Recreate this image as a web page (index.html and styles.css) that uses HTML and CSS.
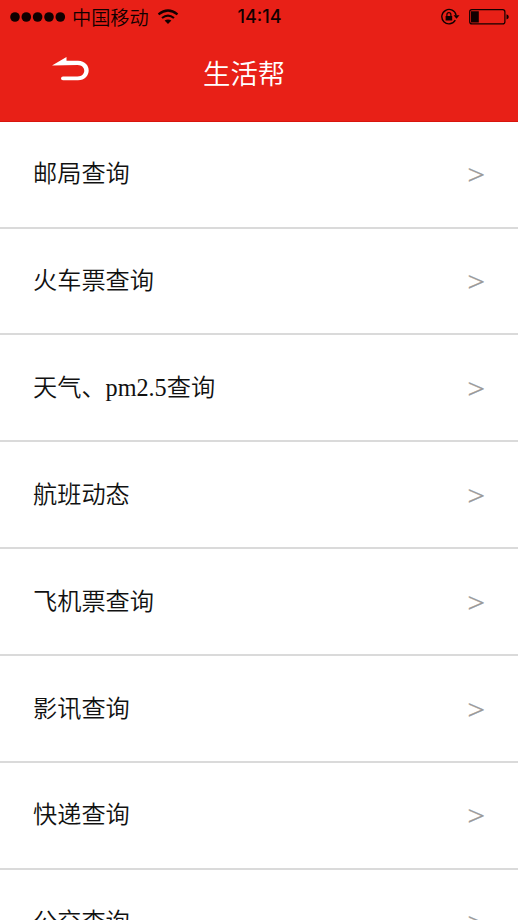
FILE: index.html
```
<!DOCTYPE html>
<html lang="zh-CN">
<head>
<meta charset="utf-8">
<title>生活帮</title>
<link rel="stylesheet" href="styles.css">
</head>
<body>
<header class="header">
  <div class="status">
    <div class="carrier">
      <svg class="dots" width="56" height="12" viewBox="0 0 56 12"><circle cx="5" cy="6" r="4.8"/><circle cx="16.3" cy="6" r="4.8"/><circle cx="27.6" cy="6" r="4.8"/><circle cx="39" cy="6" r="4.8"/><circle cx="50.3" cy="6" r="4.8"/></svg>
      <span class="name">中国移动</span>
      <svg class="wifi" width="22" height="16" viewBox="0 0 22 16"><path d="M1.5 5.3Q11 -2.3 20.5 5.3M5 9Q11 4.2 17 9" fill="none" stroke="#100" stroke-width="2.2"/><path d="M7.6 11.6Q11 9.2 14.4 11.6L11 15Z"/></svg>
    </div>
    <time class="time">14:14</time>
    <div class="power">
      <svg width="20" height="18" viewBox="0 0 20 18"><path d="M15.3 12.2A7.2 7.2 0 1 1 16.1 7.3" fill="none" stroke="#100" stroke-width="1.4"/><path d="M13.5 7.2H19.5L16.5 10.8ZM5.6 8H12.2V12.6H5.6Z"/><path d="M6.9 8.3V6.7a2 2 0 0 1 4 0V8.3" fill="none" stroke="#100" stroke-width="1.2"/></svg>
      <svg width="40" height="16" viewBox="0 0 40 16"><rect x=".7" y=".7" width="35.2" height="14.2" rx="2.2" fill="none" stroke="#100" stroke-width="1.2"/><path d="M2 2.2H9.8V13.4H2ZM37.5 5.3Q39.8 6 39.8 7.9T37.5 10.5Z"/></svg>
    </div>
  </div>
  <nav class="bar">
    <svg class="back" width="38" height="26" viewBox="0 0 38 26"><path d="M0 9.6L14.5 1V4.8H26C41 5.5 39.5 24.2 26 24.2H11Q9 24.2 9 22.4T11 20.5H25.5C34.5 20.5 34.5 9.1 25.5 9.1Z" fill="#fff"/></svg>
    <h1 class="title">生活帮</h1>
  </nav>
</header>
<ul class="list">
  <li class="row"><span>邮局查询</span><span class="arrow">&gt;</span></li>
  <li class="row"><span>火车票查询</span><span class="arrow">&gt;</span></li>
  <li class="row"><span>天气、pm2.5查询</span><span class="arrow">&gt;</span></li>
  <li class="row"><span>航班动态</span><span class="arrow">&gt;</span></li>
  <li class="row"><span>飞机票查询</span><span class="arrow">&gt;</span></li>
  <li class="row"><span>影讯查询</span><span class="arrow">&gt;</span></li>
  <li class="row"><span>快递查询</span><span class="arrow">&gt;</span></li>
  <li class="row"><span>公交查询</span><span class="arrow">&gt;</span></li>
</ul>
</body>
</html>
```
FILE: styles.css
```
* { box-sizing: border-box; }
body {
  margin: 0;
  height: 920px;
  overflow: hidden;
  background: #fff;
  color: #111;
  font-family: "Liberation Serif", "Noto Sans CJK SC", serif;
}
.header {
  height: 122px;
  background: #e82017;
  border-bottom: 1px solid #d8150e;
}
.status {
  display: grid;
  grid-template-columns: 1fr auto 1fr;
  align-items: center;
  height: 33px;
  padding: 0 9px 0 10px;
  color: #100;
}
.status svg { display: block; fill: #100; }
.carrier { display: flex; align-items: center; }
.name {
  margin-left: 6px;
  font: 350 19.2px/32px "Noto Sans CJK SC", sans-serif;
}
.wifi { margin-left: 8px; }
.time { font: 500 18px/33px Inter, sans-serif; }
.power {
  display: flex;
  align-items: center;
  justify-content: flex-end;
  gap: 9px;
}
.bar { display: flex; padding-left: 52px; }
.back { margin-top: 23px; }
.title {
  margin: 19px 0 0 113px;
  color: #fff;
  font: 350 27.4px/40px "Noto Sans CJK SC", sans-serif;
}
.list { margin: 0; padding: 0; list-style: none; }
.row {
  display: flex;
  justify-content: space-between;
  height: 106.9px;
  padding: 32.4px 33px 0;
  border-bottom: 2px solid #dadada;
  font-size: 24.2px;
  font-weight: 350;
  line-height: 40px;
}
.row:first-child { height: 106.6px; }
.arrow {
  height: 40px;
  color: #999;
  font-family: "Liberation Serif", serif;
  font-size: 31px;
  line-height: 42px;
  transform: scaleY(.88);
  -webkit-text-stroke: .4px #999;
}
```
